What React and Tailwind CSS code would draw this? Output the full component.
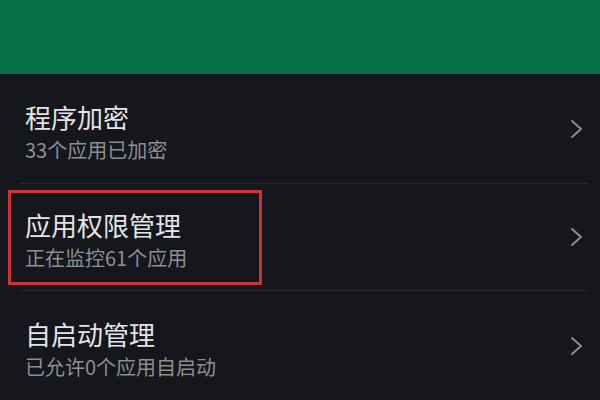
import React from 'react';

const items = [
  { title: '程序加密', sub: '33个应用已加密', h: 'h-[109px]' },
  { title: '应用权限管理', sub: '正在监控61个应用', marked: true, h: 'h-[106px]' },
  { title: '自启动管理', sub: '已允许0个应用自启动', h: 'h-[109px]' },
];

const Chevron = () => (
  <svg width="14" height="20" viewBox="0 0 14 20" fill="none" className="shrink-0">
    <path d="M2 2l9 8-9 8" stroke="#8b8c90" strokeWidth="2" strokeLinecap="round" strokeLinejoin="round" />
  </svg>
);

const Row = ({ title, sub, marked, last, h }) => (
  <div className="relative">
    <div className={`flex items-center justify-between ${h} pl-[25px] pr-[16px]`}>
      <div className="flex flex-col pt-[8px]">
        <span className="text-[26px] leading-[30px] text-[#e4e4e6]">{title}</span>
        <span className="mt-[4px] text-[20px] leading-[28px] text-[#8d8e92]">{sub}</span>
      </div>
      <Chevron />
    </div>
    {!last && <div className="ml-[20px] mr-[12px] h-px bg-[#25282e]" />}
    {/* annotation frame */}
    {marked && (
      <div className="absolute left-[8px] top-[6px] w-[254px] h-[95px] border-[3px] border-[#cc3339]" />
    )}
  </div>
);

export default function App() {
  return (
    <div
      className="w-[600px] h-[400px] overflow-hidden bg-[#15171c]"
      style={{ fontFamily: '"Noto Sans CJK SC", "Noto Sans", sans-serif' }}
    >
      <div className="h-[74px] bg-[#07714a]" />
      {items.map((it, i) => (
        <Row key={i} {...it} last={i === items.length - 1} />
      ))}
    </div>
  );
}
